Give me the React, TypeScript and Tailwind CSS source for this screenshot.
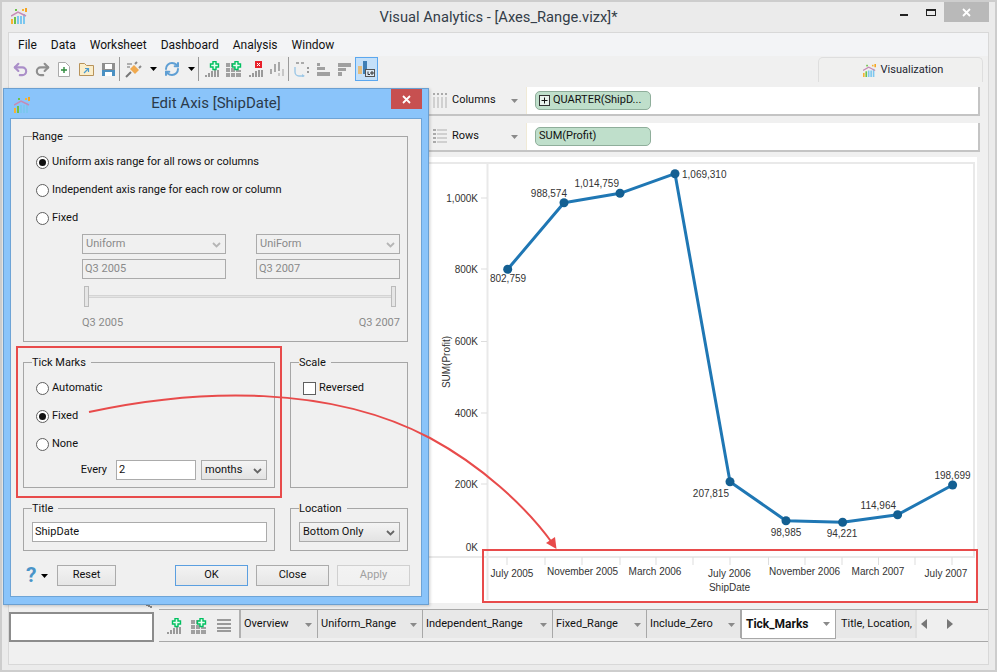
import React from 'react';
import { Undo2, Redo2, RefreshCw } from 'lucide-react';

const Logo = ({ size = 16 }: { size?: number }) => (
  <svg width={size} height={size} viewBox="0 0 16 16">
    <rect x="0" y="11" width="2" height="5" fill="#f5b335" />
    <rect x="3" y="9" width="2" height="7" fill="#6cc24a" />
    <rect x="6" y="8" width="2" height="8" fill="#7cc7ef" />
    <rect x="9" y="8" width="2" height="8" fill="#7cc7ef" />
    <rect x="12" y="6" width="2" height="10" fill="#7cc7ef" />
    <rect x="4" y="1" width="2" height="2" fill="#6cc24a" />
    <rect x="11" y="1" width="2" height="2" fill="#f5b335" />
    <rect x="14" y="0" width="2" height="4" fill="#f5a623" />
    <path d="M0 8 L7 4 L15 8" fill="none" stroke="#c78bb5" strokeWidth="1.5" />
  </svg>
);

const Plus = ({ color = '#00c060' }: { color?: string }) => (
  <path d="M9 .5h3v2.500h2.500v3H12v2.500H9V6H6.500V3H9z" fill="#e8fff0" stroke={color} strokeWidth="1.4" />
);

const BarsIcon = ({ badge }: { badge?: 'add' | 'remove' }) => (
  <svg width="16" height="16" viewBox="0 0 16 16">
    <rect x="1" y="14" width="2" height="2" fill="#9a9a9a" />
    <rect x="4" y="12" width="2" height="4" fill="#9a9a9a" />
    <rect x="7" y="10" width="2" height="6" fill="#9a9a9a" />
    <rect x="10" y="9" width="2" height="7" fill="#9a9a9a" />
    <rect x="13" y="9" width="2" height="7" fill="#9a9a9a" />
    {badge === 'add' && <Plus />}
    {badge === 'remove' && (
      <g>
        <rect x="7" y="0" width="7" height="7" fill="#e8202a" />
        <path d="M9 2l3 3M12 2l-3 3" stroke="#fff" strokeWidth="1" />
      </g>
    )}
  </svg>
);

const GridIcon = () => (
  <svg width="16" height="16" viewBox="0 0 16 16">
    <path d="M0 2h4v4H0zM5 2h3v4H5zM0 7h4v4H0zM5 7h4v4H5zM0 12h4v4H0zM5 12h4v4H5zM10 12h5v4h-5zM10 9h5v2h-5z" fill="#a0a0a0" />
    <Plus />
  </svg>
);

const Sep = () => <div className="w-px h-[24px] bg-[#9a9a9a] mx-[3px]" />;
const Caret = ({ color = '#000' }: { color?: string }) => (
  <svg width="7" height="4" viewBox="0 0 7 4"><path d="M0 0h7L3.5 4z" fill={color} /></svg>
);

const Chevron = ({ color = '#666' }: { color?: string }) => (
  <svg width="9" height="6" viewBox="0 0 9 6"><path d="M1 1l3.5 3.5L8 1" fill="none" stroke={color} strokeWidth="1.8" /></svg>
);

function Toolbar() {
  return (
    <div className="flex items-center h-[30px] pl-[4px] pb-[4px] bg-[#f0f0f0] relative">
      <Undo2 size={17} strokeWidth={3} color="#ab8fc9" className="ml-[-1px]" />
      <Redo2 size={17} strokeWidth={3} color="#8f8f8f" className="ml-[5px]" />
      <svg className="ml-[7px]" width="12" height="15" viewBox="0 0 12 15">
        <path d="M.5.5h7l4 4v10H.5z" fill="#fff" stroke="#aaa" />
        <path d="M6 5v6M3 8h6" stroke="#2e8b3d" strokeWidth="1.4" />
      </svg>
      <svg className="ml-[9px]" width="15" height="13" viewBox="0 0 15 13">
        <path d="M.5 12.5V.5h5l2 2h7v10z" fill="#fbeecb" stroke="#b8935a" />
        <path d="M5 10l4-4M6 5.500h3.500V9" fill="none" stroke="#4a9bd0" strokeWidth="1.2" />
      </svg>
      <svg className="ml-[8px]" width="13" height="13" viewBox="0 0 13 13">
        <rect width="13" height="13" fill="#8f8f8f" />
        <rect y="7" width="13" height="6" fill="#4a90c2" />
        <rect x="3" y="1" width="7" height="5" fill="#fff" />
        <rect x="3" y="9" width="7" height="4" fill="#fff" />
      </svg>
      <div className="ml-[1px]"><Sep /></div>
      <svg className="ml-[2px]" width="17" height="17" viewBox="0 0 17 17">
        <path d="M1 16l5-5" stroke="#777" strokeWidth="2" />
        <path d="M5 8l4-4 5 5-4 4z" fill="#f0a94e" />
        <path d="M10 3l2-2M14 7l2-2" stroke="#8a8a8a" strokeWidth="2" />
        <path d="M2 3h5M2 6h3" stroke="#999" strokeWidth="1.400" />
      </svg>
      <div className="ml-[8px]"><Caret /></div>
      <RefreshCw size={16} strokeWidth={3} color="#5f9fd4" className="ml-[7px]" />
      <div className="ml-[8px]"><Caret /></div>
      <Sep />
      <div className="ml-[2px] flex items-center gap-[6px]">
        <BarsIcon badge="add" />
        <GridIcon />
        <BarsIcon badge="remove" />
        <svg width="15" height="14" viewBox="0 0 15 14">
          <path d="M0 7h2v5H0zM4 2h2v8H4zM8 0h2v9H8z" fill="#a8a8a8" />
          <path d="M12 7h2v7h-2zM8 11h2v3H8z" fill="#c8c8c8" />
        </svg>
      </div>
      <Sep />
      <svg className="ml-[2px]" width="15" height="15" viewBox="0 0 15 15">
        <path d="M1 5v5a4 4 0 0 0 4 4h5" fill="none" stroke="#9cc7e6" strokeWidth="1.4" />
        <path d="M2 1h10" stroke="#aaa" strokeWidth="2" strokeDasharray="3 2" />
        <path d="M13 5h2v2h-2zM13 9h2v2h-2z" fill="#999" />
        <path d="M8 12l3 2-3 1z" fill="#9cc7e6" />
      </svg>
      <svg className="ml-[7px]" width="14" height="14" viewBox="0 0 14 14">
        <path d="M1 1h3v3H1zM1 5h8v3H1zM1 10h13v4H1z" fill="#a0a0a0" />
      </svg>
      <svg className="ml-[8px]" width="14" height="14" viewBox="0 0 14 14">
        <path d="M0 1h13v4H0zM0 6h8v3H0zM0 10h4v4H0z" fill="#a0a0a0" />
      </svg>
      <div className="ml-[3px] w-[23px] h-[24px] bg-[#c4e0f9] border border-[#5ba7ef] flex items-center justify-center">
        <svg width="17" height="16" viewBox="0 0 17 16">
          <rect x="0" y="5" width="4" height="8" fill="#e4bd7e" />
          <rect x="5" y="0" width="4" height="13" fill="#3f7fb5" />
          <rect x="7.500" y="8.500" width="9" height="7" fill="#dce9f5" stroke="#555" />
          <path d="M10 10.500v3h2M13 11h2v2h-2z" fill="none" stroke="#333" />
        </svg>
      </div>
      <div className="absolute left-[809px] top-[1px] w-[165px] h-[25px] pt-[1px] rounded-t-[5px] border border-b-0 border-[#dedede] bg-[#f0f0ef] flex items-center justify-center gap-[5px] pl-[5px]">
        <Logo size={13} />
        <span className="text-[#1c2530]">Visualization</span>
      </div>
    </div>
  );
}

function Shelf({ label, kind, children }: { label: string; kind: 'col' | 'row'; children: React.ReactNode }) {
  return (
    <div className="flex h-[29px] w-[551px] bg-white border-b-2 border-r-2 border-[#c4c4c4]">
      <div className="flex items-center w-[98px] bg-[#f0f0f0] border-r border-[#f0ead6] pl-[4px]">
        {kind === 'col' ? (
          <svg width="14" height="15" viewBox="0 0 14 15">
            <path d="M0 0h2v2H0zM4 0h2v2H4zM8 0h2v2H8zM12 0h2v2h-2z" fill="#aaa" />
            <path d="M0 4h2v11H0zM4 4h2v11H4zM8 4h2v11H8zM12 4h2v11h-2z" fill="#d0d0d0" />
          </svg>
        ) : (
          <svg width="14" height="15" viewBox="0 0 14 15">
            <path d="M0 0h3v2H0zM0 4h3v2H0zM0 8h3v2H0zM0 12h3v2H0z" fill="#aaa" />
            <path d="M4 0h10v2H4zM4 4h10v2H4zM4 8h10v2H4zM4 12h10v2H4z" fill="#d0d0d0" />
          </svg>
        )}
        <span className="ml-[5px] flex-1">{label}</span>
        <span className="mr-[8px]"><Caret color="#8a8a8a" /></span>
      </div>
      <div className="flex items-center pl-[8px]">{children}</div>
    </div>
  );
}

function Pill({ children }: { children: React.ReactNode }) {
  return (
    <div className="flex items-center gap-[3px] w-[116px] h-[19px] px-[3px] rounded-[5px] bg-[#bfdfcb] border border-[#8fae9b] whitespace-nowrap overflow-hidden">
      {children}
    </div>
  );
}

function Chart() {
  const points = [
    [507.7, 269.3], [564, 202.7], [620, 193.3], [675, 173.7], [730, 481.7],
    [786, 520.7], [842.6, 522.3], [897.6, 514.7], [952.6, 485],
  ];
  const values: [string, number, number, 'start' | 'middle' | 'end'][] = [
    ['802,759', 508, 282, 'middle'], ['988,574', 567, 197, 'end'], ['1,014,759', 619, 187, 'end'],
    ['1,069,310', 682, 178, 'start'], ['207,815', 729, 497, 'end'], ['98,985', 786, 536, 'middle'],
    ['94,221', 842, 537, 'middle'], ['114,964', 896, 509, 'end'], ['198,699', 952.500, 479, 'middle'],
  ];
  const yLabels: [string, number][] = [['1,000K', 198], ['800K', 269], ['600K', 341.500], ['400K', 413], ['200K', 484]];
  const ticks = [507, 545, 582, 620, 656, 693, 730, 768.5, 805, 842, 878.5, 915, 952];
  const xLabels: [string, number, number][] = [
    ['July 2005', 512, 577], ['November 2005', 582.500, 575], ['March 2006', 655, 575], ['July 2006', 729.500, 577],
    ['November 2006', 804.500, 575], ['March 2007', 878, 575], ['July 2007', 946, 577], ['ShipDate', 729.500, 591],
  ];
  return (
    <svg width="548" height="446" viewBox="429 157 548 446" className="bg-white block font-['Liberation_Sans',sans-serif]">
      <g fill="#e9e9e9">
        <rect x="429" y="162" width="545" height="2" />
        <rect x="429" y="556" width="545" height="2" />
        <rect x="486.500" y="162" width="2" height="438" />
        <rect x="973" y="162" width="2" height="396" />
      </g>
      {yLabels.map(([t, y]) => (
        <g key={t}>
          <text x="478" y={y + 3.500} textAnchor="end" fontSize="10" fill="#333">{t}</text>
          <path d={`M481 ${y}h6`} stroke="#ddd" />
        </g>
      ))}
      <text x="478" y="551" textAnchor="end" fontSize="10" fill="#333">0K</text>
      <text transform="translate(450 362) rotate(-90)" textAnchor="middle" fontSize="10" fill="#333">SUM(Profit)</text>
      {ticks.map(x => <path key={x} d={`M${x} 557v8`} stroke="#ddd" />)}
      {xLabels.map(([t, x, y]) => (
        <text key={t} x={x} y={y} textAnchor="middle" fontSize="10" fill="#333">{t}</text>
      ))}
      <polyline points={points.map(p => p.join(',')).join(' ')} fill="none" stroke="#1f77b4" strokeWidth="3" strokeLinejoin="round" />
      {points.map(([x, y]) => <circle key={x} cx={x} cy={y} r="4.500" fill="#135f92" />)}
      {values.map(([t, x, y, a]) => (
        <text key={t} x={x} y={y} textAnchor={a} fontSize="10" fill="#333">{t}</text>
      ))}
    </svg>
  );
}

const Radio = ({ checked, label }: { checked?: boolean; label: string }) => (
  <div className="flex items-center h-[28px]">
    <span className="w-[13px] h-[13px] rounded-full border border-[#5f5f5f] bg-white flex items-center justify-center">
      {checked && <span className="w-[7px] h-[7px] rounded-full bg-[#111]" />}
    </span>
    <span className="ml-[3px]">{label}</span>
  </div>
);

function Combo({ value, width, disabled }: { value: string; width: string; disabled?: boolean }) {
  return (
    <div
      className={`flex items-center justify-between h-[20px] ${width} pl-[3px] pr-[4px] pt-[1px] border border-[#ababab] ${
        disabled ? 'text-[#8a8a8a] bg-[#f0f0f0]' : 'bg-gradient-to-b from-[#f4f4f4] to-[#e3e3e3]'
      }`}
    >
      <span>{value}</span>
      <Chevron color={disabled ? '#b5b5b5' : '#666'} />
    </div>
  );
}

function TextBox({ value, width, disabled }: { value: string; width: string; disabled?: boolean }) {
  return (
    <div className={`flex items-center h-[20px] ${width} pl-[2px] pt-[1px] border ${disabled ? 'border-[#ababab] text-[#8a8a8a]' : 'border-[#ababab] bg-white'}`}>
      {value}
    </div>
  );
}

function Group({ title, className, inset, children }: { title: string; className: string; inset: string; children: React.ReactNode }) {
  return (
    <fieldset className={`border border-[#a6a6a6] ${className}`}>
      <legend className="ml-[8px] pr-[5px] pt-[2px] leading-[14px]">{title}</legend>
      <div className={inset}>{children}</div>
    </fieldset>
  );
}

function DlgButton({ label, width, primary, disabled }: { label: string; width: string; primary?: boolean; disabled?: boolean }) {
  return (
    <button
      className={`h-[21px] ${width} border bg-gradient-to-b from-[#f3f3f3] to-[#e6e6e6] ${
        primary ? 'border-[#5b9fe0]' : disabled ? 'border-[#d0d0d0] text-[#a0a0a0] from-[#f0f0f0] to-[#f0f0f0]' : 'border-[#ababab]'
      }`}
    >
      {label}
    </button>
  );
}

function EditAxisDialog() {
  return (
    <div className="absolute left-[1px] top-[86px] w-[426px] h-[517px] bg-[#8ac4fa] border border-[#6b9fd0] flex flex-col shadow-[1px_1px_3px_rgba(0,0,0,0.2)]">
      <div className="relative flex items-center justify-center h-[29px]">
        <span className="absolute left-[10px] top-[8px]"><Logo /></span>
        <span className="text-[15px] text-[#2b3a4a]">Edit Axis [ShipDate]</span>
        <div className="absolute right-[6px] top-0 w-[31px] h-[20px] bg-[#c75050] flex items-center justify-center">
          <svg width="9" height="9" viewBox="0 0 9 9"><path d="M1 1l7 7M8 1l-7 7" stroke="#fff" strokeWidth="1.8" /></svg>
        </div>
      </div>
      <div className="mx-[6px] h-[479px] bg-[#f0f0f0] border border-[#6ea4d6] pl-[12px] pr-[11px] pt-[9px]">
        <Group title="Range" className="h-[214px] w-[385px]" inset="pl-[12px] pt-[4px]">
          <Radio checked label="Uniform axis range for all rows or columns" />
          <Radio label="Independent axis range for each row or column" />
          <Radio label="Fixed" />
          <div className="ml-[46px] mt-[2px] w-[318px] flex flex-col">
            <div className="flex justify-between">
              <Combo value="Uniform" width="w-[144px]" disabled />
              <Combo value="UniForm" width="w-[144px]" disabled />
            </div>
            <div className="flex justify-between mt-[5px]">
              <TextBox value="Q3 2005" width="w-[144px]" disabled />
              <TextBox value="Q3 2007" width="w-[144px]" disabled />
            </div>
            <div className="flex items-center h-[21px] mt-[7px] mx-[2px] pr-[2px]">
              <span className="w-[5px] h-[21px] border border-[#bbb] bg-[#e6e6e6]" />
              <span className="flex-1 h-[3px] bg-[#e4e4e4] border-y border-[#d4d4d4]" />
              <span className="w-[5px] h-[21px] border border-[#bbb] bg-[#e6e6e6]" />
            </div>
            <div className="flex justify-between mt-[8px] text-[#8a8a8a]">
              <span>Q3 2005</span>
              <span>Q3 2007</span>
            </div>
          </div>
        </Group>
        <div className="flex gap-[15px] mt-[12px] w-[385px]">
          <Group title="Tick Marks" className="w-[252px] h-[134px]" inset="pl-[12px] pt-[4px]">
            <Radio label="Automatic" />
            <Radio checked label="Fixed" />
            <Radio label="None" />
            <div className="flex items-center justify-end pr-[7px] mt-[2px]">
              <span className="mr-[9px] pt-[1px]">Every</span>
              <TextBox value="2" width="w-[80px]" />
              <span className="w-[5px]" />
              <Combo value="months" width="w-[66px]" />
            </div>
          </Group>
          <Group title="Scale" className="w-[118px] h-[134px]" inset="pl-[12px] pt-[4px]">
            <div className="flex items-center h-[28px]">
              <span className="w-[13px] h-[13px] border border-[#5f5f5f] bg-white" />
              <span className="ml-[3px]">Reversed</span>
            </div>
          </Group>
        </div>
        <div className="flex gap-[15px] mt-[12px] w-[385px]">
          <Group title="Title" className="w-[252px] h-[51px]" inset="pl-[8px] pt-[6px]">
            <TextBox value="ShipDate" width="w-[235px]" />
          </Group>
          <Group title="Location" className="w-[118px] h-[51px]" inset="pl-[8px] pt-[6px]">
            <Combo value="Bottom Only" width="w-[101px]" />
          </Group>
        </div>
        <div className="flex items-center mt-[14px]">
          <span className="ml-[3px] w-[14px] text-[21px] leading-[21px] font-bold text-[#4a94c8]">?</span>
          <span className="ml-[1px] mr-[9px]"><Caret /></span>
          <DlgButton label="Reset" width="w-[59px]" />
          <div className="flex-1" />
          <div className="flex gap-[8px]">
            <DlgButton label="OK" width="w-[73px]" primary />
            <DlgButton label="Close" width="w-[73px]" />
            <DlgButton label="Apply" width="w-[73px]" disabled />
          </div>
        </div>
      </div>
    </div>
  );
}

const tabs = [
  { label: 'Overview', width: 'w-[77px]' },
  { label: 'Uniform_Range', width: 'w-[105px]' },
  { label: 'Independent_Range', width: 'w-[130px]' },
  { label: 'Fixed_Range', width: 'w-[94px]' },
  { label: 'Include_Zero', width: 'w-[94px]' },
];

function TabStrip() {
  return (
    <div className="flex flex-1 h-[33px] mt-[6px] border-t border-b border-[#a8a8a8] bg-[#efefef]">
      <div className="flex items-center gap-[9px] w-[80px] pl-[7px]">
        <BarsIcon badge="add" />
        <GridIcon />
        <svg width="16" height="13" viewBox="0 0 16 13">
          <path d="M1 0h14v2H1zM1 4h14v2H1zM1 8h14v2H1zM1 11h14v2H1z" fill="#9a9a9a" />
        </svg>
      </div>
      <div className="flex h-[28px] w-[676px] border-l-2 border-[#b0b0b0] bg-[#e8e8e8]">
        {tabs.map(t => (
          <div key={t.label} className={`flex items-center justify-between ${t.width} pl-[3px] pr-[5px] pt-[1px] border-r border-[#a8a8a8]`}>
            <span>{t.label}</span>
            <Caret color="#8a8a8a" />
          </div>
        ))}
        <div className="flex items-center justify-between w-[95px] h-[29px] pl-[4px] pr-[5px] bg-white border border-t-0 border-[#a8a8a8] font-bold text-[12px]">
          <span>Tick_Marks</span>
          <Caret color="#8a8a8a" />
        </div>
        <div className="pl-[5px] pt-[1px] flex-1 flex items-center overflow-hidden whitespace-nowrap">Title, Location, and more</div>
      </div>
      <div className="flex items-center gap-[20px] pl-[4px] border-l-2 border-[#e0e0e0] h-[28px]">
        <svg width="6" height="10" viewBox="0 0 6 10"><path d="M6 0v10L0 5z" fill="#777" /></svg>
        <svg width="6" height="10" viewBox="0 0 6 10"><path d="M0 0v10l6-5z" fill="#777" /></svg>
      </div>
    </div>
  );
}

export default function App() {
  return (
    <div className="relative w-[997px] h-[672px] overflow-hidden border-2 border-[#cdcdcd] bg-[#ebebeb] text-[11px] text-[#111] font-['Roboto',sans-serif]">
      <div className="relative flex items-center justify-center h-[30px]">
        <span className="absolute left-[9px] top-[6px]"><Logo /></span>
        <span className="text-[14.7px] text-[#333d48]">Visual Analytics - [Axes_Range.vizx]*</span>
        <div className="absolute right-[6px] top-0 flex items-start">
          <span className="mt-[12px] mr-[18px] w-[8px] h-[2px] bg-[#222]" />
          <span className="mt-[7px] mr-[8px] w-[10px] h-[7px] border border-t-2 border-[#222]" />
          <div className="w-[45px] h-[20px] bg-[#b9b9b9] flex items-center justify-center">
            <svg width="9" height="9" viewBox="0 0 9 9"><path d="M1 1l7 7M8 1l-7 7" stroke="#fff" strokeWidth="1.800" /></svg>
          </div>
        </div>
      </div>
      <div className="ml-[6px] w-[981px] h-[633px] border border-[#d8d8d8] bg-[#f0f0f0]">
        <div className="flex items-center gap-[14px] h-[23px] pl-[9px] bg-[#f3f4f6] text-[12px]">
          <span>File</span>
          <span>Data</span>
          <span>Worksheet</span>
          <span>Dashboard</span>
          <span>Analysis</span>
          <span>Window</span>
        </div>
        <Toolbar />
        <div className="flex h-[517px]">
          <div className="w-[420px]" />
          <div className="flex flex-col pt-[1px]">
            <Shelf label="Columns" kind="col">
              <Pill>
                <svg width="11" height="11" viewBox="0 0 11 11" className="shrink-0">
                  <rect x=".5" y=".5" width="10" height="10" fill="#e8f2ec" stroke="#333" />
                  <path d="M5.500 2.500v6M2.500 5.500h6" stroke="#111" />
                </svg>
                QUARTER(ShipD...
              </Pill>
            </Shelf>
            <div className="mt-[7px]">
              <Shelf label="Rows" kind="row">
                <Pill>SUM(Profit)</Pill>
              </Shelf>
            </div>
            <div className="mt-[5px]"><Chart /></div>
          </div>
        </div>
        <div className="relative flex h-[39px]">
          <div className="mt-[9px] w-[145px] h-[30px] bg-white border-2 border-[#8c8c8c]" />
          <div className="w-[5px]" />
          <TabStrip />
          <svg className="absolute left-[137px] top-[1px]" width="6" height="4" viewBox="0 0 6 4">
            <path d="M0 0h2v1h2v1h2v2H4V3H2V2H0z" fill="#8a8a8a" />
          </svg>
        </div>
      </div>

      <EditAxisDialog />

      {/* red callouts */}
      <div className="absolute left-[14px] top-[344px] w-[266px] h-[152px] border-2 border-[#e84b4b]" />
      <div className="absolute left-[480px] top-[547px] w-[496px] h-[54px] border-2 border-[#e84b4b]" />
      <svg className="absolute left-[-2px] top-[-2px] pointer-events-none" width="997" height="672" viewBox="0 0 997 672">
        <path d="M89 412C200 388 330 385 430 438C480 465 525 505 553 544" fill="none" stroke="#e84b4b" strokeWidth="2" />
        <path d="M556.500 549L546 543L555 537z" fill="#e84b4b" />
      </svg>
    </div>
  );
}
